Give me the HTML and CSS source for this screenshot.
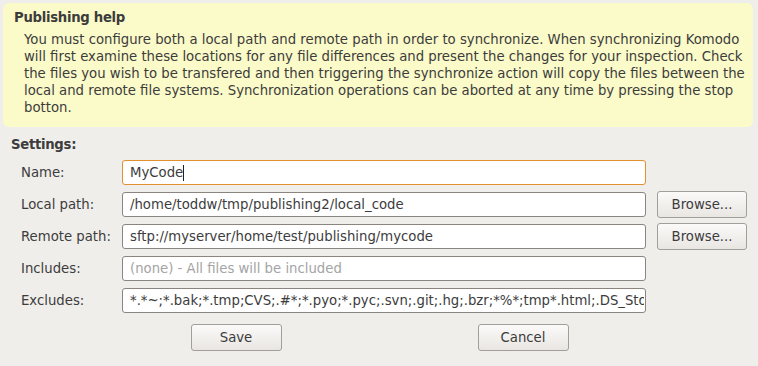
FILE: index.html
```html
<!DOCTYPE html>
<html>
<head>
<meta charset="utf-8">
<link rel="stylesheet" href="styles.css">
</head>
<body>
<div class="dialog">
  <div class="help">
    <div class="help-title">Publishing help</div>
    <div class="help-body">
      <span class="line">You must configure both a local path and remote path in order to synchronize. When synchronizing Komodo</span>
      <span class="line">will first examine these locations for any file differences and present the changes for your inspection. Check</span>
      <span class="line">the files you wish to be transfered and then triggering the synchronize action will copy the files between the</span>
      <span class="line">local and remote file systems. Synchronization operations can be aborted at any time by pressing the stop</span>
      <span class="line">botton.</span>
    </div>
  </div>
  <div class="settings-title">Settings:</div>
  <div class="form">
    <label class="label">Name:</label>
    <div class="field focus"><span class="value">MyCode</span><span class="caret"></span></div>
    <div class="empty"></div>

    <label class="label">Local path:</label>
    <div class="field"><span class="value">/home/toddw/tmp/publishing2/local_code</span></div>
    <button class="btn browse">Browse...</button>

    <label class="label">Remote path:</label>
    <div class="field"><span class="value">sftp://myserver/home/test/publishing/mycode</span></div>
    <button class="btn browse">Browse...</button>

    <label class="label">Includes:</label>
    <input class="field input" type="text" placeholder="(none) - All files will be included">
    <div class="empty"></div>

    <label class="label">Excludes:</label>
    <input class="field input" type="text" value="*.*~;*.bak;*.tmp;CVS;.#*;*.pyo;*.pyc;.svn;.git;.hg;.bzr;*%*;tmp*.html;.DS_Store">
    <div class="empty"></div>
  </div>
  <div class="actions">
    <button class="btn action">Save</button>
    <button class="btn action">Cancel</button>
  </div>
</div>
</body>
</html>
```
FILE: styles.css
```css
html, body {
  margin: 0;
  padding: 0;
  background: #f0eeeb;
}
body {
  font-family: "DejaVu Sans", "Noto Sans", sans-serif;
  font-size: 13.25px;
  color: #3c3c3c;
  width: 758px;
  height: 366px;
  overflow: hidden;
}
.dialog {
  display: flex;
  flex-direction: column;
}
.help {
  margin: 3px 5px 0 3px;
  height: 124px;
  box-sizing: border-box;
  background: #fbfac9;
  border-radius: 6px;
  padding: 6px 0 0 11px;
}
.help-title {
  font-weight: bold;
  line-height: 18px;
  letter-spacing: -0.3px;
}
.help-body {
  padding-left: 10px;
  margin-top: 4px;
  display: flex;
  flex-direction: column;
}
.line {
  white-space: nowrap;
  line-height: 17px;
}
.settings-title {
  font-weight: bold;
  margin: 9px 0 0 11px;
  line-height: 18px;
  letter-spacing: -0.3px;
}
.form {
  display: grid;
  grid-template-columns: 101px 524px 101px;
  column-gap: 0;
  row-gap: 7px;
  grid-auto-rows: 25px;
  padding-left: 21px;
  margin-top: 6px;
  align-items: center;
}
.label {
  line-height: 18px;
  white-space: nowrap;
}
.field {
  height: 25px;
  width: 524px;
  box-sizing: border-box;
  background: #ffffff;
  border: 1px solid #8a857f;
  border-radius: 3px;
  display: flex;
  align-items: center;
  padding: 0 7px;
  overflow: hidden;
  white-space: nowrap;
  margin: 0;
}
.input {
  font: inherit;
  color: #3c3c3c;
  outline: none;
  padding-right: 1px;
}
.input::placeholder {
  color: #a4a4a4;
  opacity: 1;
}
.field.focus {
  border-color: #e0902f;
}
.value {
  white-space: nowrap;
}
.caret {
  display: inline-block;
  width: 1px;
  height: 16px;
  background: #202020;
}
.btn {
  font: inherit;
  color: #3c3c3c;
  height: 27px;
  box-sizing: border-box;
  border: 1px solid #a29e99;
  border-radius: 3px;
  background: linear-gradient(to bottom, #fbfaf9, #e9e6e2);
  padding: 0;
  margin: 0;
}
.browse {
  width: 90px;
  justify-self: end;
}
.actions {
  display: flex;
  justify-content: center;
  gap: 196px;
  margin-top: 11px;
  margin-left: 1px;
}
.action {
  width: 91px;
}
```
